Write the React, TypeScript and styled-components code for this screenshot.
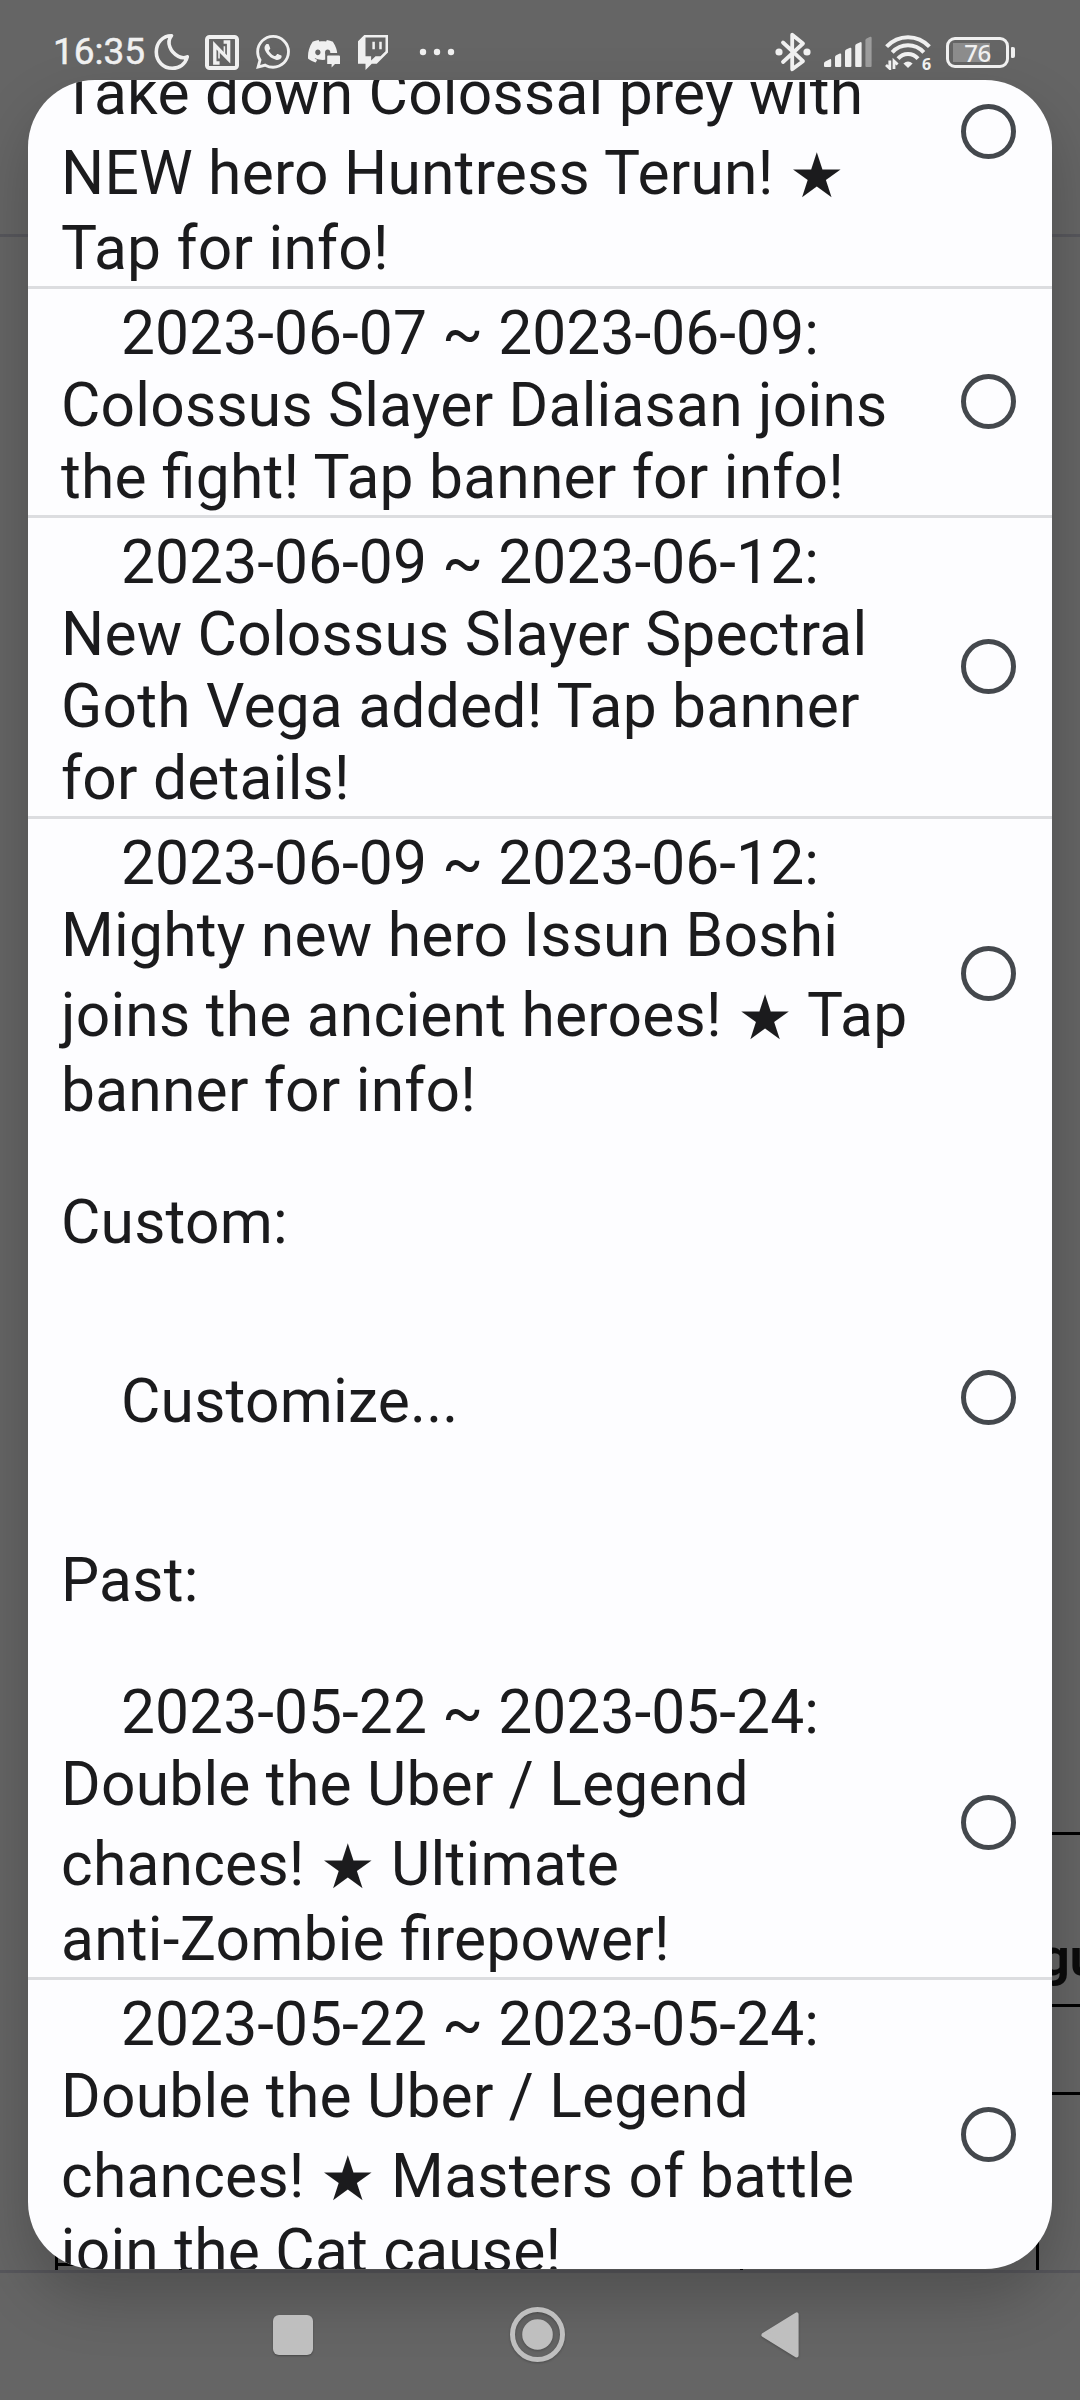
import React from 'react';
import styled, { createGlobalStyle } from 'styled-components';
import { SiDiscord, SiWhatsapp } from 'react-icons/si';

const GlobalStyle = createGlobalStyle`
  html, body { margin: 0; padding: 0; }
  body { background: #656565; font-family: Roboto, "Noto Sans", sans-serif; }
  *, *::before, *::after { box-sizing: border-box; }
`;

const Screen = styled.div`
  position: relative;
  width: 1080px;
  height: 2400px;
  overflow: hidden;
  background: #656565;
`;

/* ---- dimmed page behind the dialog ---- */
const DimmedPage = styled.div`
  display: flex;
  flex-direction: column;
  height: 2400px;
`;
const DimmedHeader = styled.div`
  height: 237px;
  border-bottom: 3px solid #57575c;
`;
const DimmedBody = styled.div`
  display: flex;
  flex-direction: column;
  align-items: flex-end;
  height: 2033px;
  padding-top: 1595px;
`;
const DimmedCell = styled.div<{ $h: number }>`
  display: flex;
  align-items: flex-end;
  width: 40px;
  height: ${p => p.$h}px;
  border-top: 3px solid #000;
`;
const DimmedText = styled.span`
  padding: 0 0 16px 0;
  font: 700 52px/60px Roboto, sans-serif;
  color: #0b0b0b;
  white-space: nowrap;
`;
const DimmedTable = styled.div`
  display: flex;
  width: 984px;
  height: 30px;
  margin: auto 41px 0 0;
  border: 0 solid #000;
  border-width: 0 3px;
  align-items: flex-end;
`;
const DimmedTableRow = styled.div`
  display: flex;
  width: 900px;
  height: 7px;
  border-top: 3px solid #000;
`;
const DimmedColumn = styled.div<{ $w: number }>`
  width: ${p => p.$w}px;
  border-right: 3px solid #000;
`;
const DimmedFooter = styled.div`
  flex: 1;
  border-top: 3px solid #57575c;
`;

/* ---- foreground ---- */
const Foreground = styled.div`
  position: absolute;
  inset: 0;
  display: flex;
  flex-direction: column;
`;

const StatusBar = styled.header`
  position: relative;
  z-index: 1;
  display: flex;
  align-items: center;
  height: 80px;
  padding: 24px 65px 0 53px;
`;
const Clock = styled.span`
  width: 101px;
  font: 400 37px/40px Roboto, sans-serif;
  -webkit-text-stroke: 0.5px #f0f0f0;
  color: #f0f0f0;
`;
const StatusSlot = styled.span<{ $gap?: number }>`
  display: flex;
  margin-left: ${p => p.$gap ?? 0}px;
  color: #f0f0f0;
  svg { display: block; }
`;
const Spring = styled.span`
  flex: 1;
`;
const Battery = styled.span`
  display: flex;
  align-items: center;
  margin-left: 15px;
`;
const BatteryBody = styled.span`
  display: flex;
  align-items: center;
  justify-content: center;
  width: 63px;
  height: 31px;
  border: 3px solid #f0f0f0;
  border-radius: 9px;
  font: 500 24px/25px "Noto Sans", sans-serif;
  letter-spacing: -0.6px;
  color: #f0f0f0;
  background: linear-gradient(#8c8c8c, #8c8c8c) 4px 3px / 37px 19px no-repeat;
  background-origin: padding-box;
`;
const BatteryCap = styled.span`
  width: 4px;
  height: 11px;
  margin-left: 2px;
  border-radius: 1px 2px 2px 1px;
  background: #f0f0f0;
`;

const Dialog = styled.main`
  height: 2189px;
  margin: 0 28px;
  border-radius: 67px;
  background: #fdfdff;
  overflow: hidden;
  box-shadow: 0 28px 60px rgba(0, 0, 0, 0.22);
`;
const ScrolledList = styled.div`
  display: flex;
  flex-direction: column;
  margin-top: -103px;
`;
const Entry = styled.section<{ $divided?: boolean }>`
  display: flex;
  flex: none;
  align-items: center;
  justify-content: space-between;
  padding: 0 35.7px 0 33px;
  border-bottom: ${p => (p.$divided ? '3px solid #dcdde0' : '0')};
`;
const EntryText = styled.div`
  padding: 9px 0 1px;
`;
const Line = styled.div<{ $indent?: boolean; $tall?: boolean }>`
  height: ${p => (p.$tall ? 83 : 72)}px;
  padding: ${p => (p.$tall ? 8 : 0)}px 0 0 ${p => (p.$indent ? 60 : 0)}px;
  font-size: 60.5px;
  line-height: 72px;
  letter-spacing: 0.22px;
  font-feature-settings: "liga" 1;
  color: #1b1b1d;
  white-space: pre;
`;
const DateLine = styled(Line)`
  letter-spacing: 0.05px;
`;
const Star = styled.span`
  display: inline-block;
  width: 56px;
  text-align: center;
  letter-spacing: 0;
  vertical-align: -3px;
  font: 62px/56px "DejaVu Sans", sans-serif;
`;
const ShortRow = styled.section`
  display: flex;
  flex: none;
  align-items: center;
  justify-content: space-between;
  height: 180px;
  padding: 0 35.7px 0 33px;
`;
const ShortText = styled.div<{ $top: number }>`
  padding-top: ${p => p.$top}px;
`;
const Radio = styled.span`
  flex: none;
  width: 55px;
  height: 55px;
  margin-bottom: 1px;
  border: 5.5px solid #44484d;
  border-radius: 50%;
`;

const NavBar = styled.nav`
  position: relative;
  z-index: 1;
  display: flex;
  align-items: center;
  height: 131px;
  padding-left: 273px;
  gap: 196.5px;
  color: #bfbfbf;
  svg { display: block; filter: drop-shadow(0 1px 1px rgba(0, 0, 0, 0.25)); }
`;
const Recents = styled.span`
  width: 40px;
  height: 40px;
  border-radius: 6px;
  background: #bfbfbf;
  box-shadow: 0 1px 2px rgba(0, 0, 0, 0.3);
`;

const MoonIcon = () => (
  <svg width="36" height="38" viewBox="0 0 36 38" fill="none" stroke="currentColor" strokeWidth="3.6" strokeLinejoin="round">
    <path d="M17.5 2.7C8.7 2.6 2.3 9.9 2.3 18.9C2.3 28.4 9.5 35.3 18.3 35.3C25.6 35.3 31.3 31 33.3 23.8C30.5 25.2 27.4 25 24.3 23.4C16.3 19.2 12 9.4 17.5 2.7Z" />
  </svg>
);
const NfcIcon = () => (
  <svg width="34" height="35" viewBox="0 0 34 35" fill="none" stroke="currentColor">
    <rect x="2" y="2" width="30" height="31" rx="2.6" strokeWidth="4" />
    <path d="M14.6 28H9.8V10.2L23.6 24.4V7H18.6" strokeWidth="3.4" />
    <path d="M14 14V23.4M19.4 20.4V11.2" strokeWidth="1.6" />
  </svg>
);
const DiscordIcon = () => (
  <svg width="32" height="35" viewBox="0 0 32 35">
    <mask id="bubbleGap">
      <rect width="32" height="35" fill="#fff" />
      <rect x="17.2" y="18" width="15" height="17" fill="#000" />
    </mask>
    <g mask="url(#bubbleGap)">
      <SiDiscord x={0} y={1.5} size={29.5} />
    </g>
    <path d="M20 20.5h11q1 0 1 1V29h-5l-3.4 3.6V29h-4.4V21q0-.5.8-.5z" fill="currentColor" />
  </svg>
);
const TwitchIcon = () => (
  <svg width="30" height="35" viewBox="1.714 0 20.572 24" fill="currentColor">
    <path d="M11.571 4.714h1.715v5.143H11.57zm4.715 0H18v5.143h-1.714zM6 0L1.714 4.286v15.428h5.143V24l4.286-4.286h3.428L22.286 12V0zm14.571 11.143l-3.428 3.428h-3.429l-3 3v-3H6.857V1.714h13.714Z" />
  </svg>
);
const MoreIcon = () => (
  <svg width="36" height="8" viewBox="0 0 36 8" fill="currentColor">
    <circle cx="4" cy="4" r="3.2" />
    <circle cx="18" cy="4" r="3.2" />
    <circle cx="32" cy="4" r="3.2" />
  </svg>
);
const BluetoothIcon = () => (
  <svg width="36" height="40" viewBox="0 0 36 40" fill="none" stroke="currentColor" strokeWidth="3.8" strokeLinejoin="round" strokeLinecap="round">
    <path d="M8 10.5L28 29.2L17.2 37.3V2.7L28 11.5L8 30" />
    <circle cx="4" cy="20" r="3.6" fill="currentColor" stroke="none" />
    <circle cx="32" cy="20" r="3.6" fill="currentColor" stroke="none" />
  </svg>
);
const SignalIcon = () => (
  <svg width="48" height="32" viewBox="0 0 48 32" fill="currentColor">
    <path d="M0 27.5Q0 26 1.4 25.4L5.8 23.2Q7.2 22.8 7.2 24.2V30Q7.2 31 6.2 31H1Q0 31 0 30Z" />
    <path d="M11 21.2Q11 19.8 12.2 19.2L15.8 17.6Q17.2 17.2 17.2 18.6V30Q17.2 31 16.2 31H12Q11 31 11 30Z" />
    <path d="M21 15.6Q21 14.2 22.2 13.6L26 11.8Q27.4 11.4 27.4 12.8V30Q27.4 31 26.4 31H22Q21 31 21 30Z" />
    <path d="M31.2 10Q31.2 8.6 32.4 8L36.2 6.2Q37.6 5.8 37.6 7.2V30Q37.6 31 36.6 31H32.2Q31.2 31 31.2 30Z" />
    <path opacity="0.4" d="M41.4 4.4Q41.4 3 42.6 2.4L46.2.8Q47.6.4 47.6 1.8V30Q47.6 31 46.6 31H42.4Q41.4 31 41.4 30Z" />
  </svg>
);
const SixLabel = styled.span`
  align-self: flex-end;
  width: 9px;
  margin: 0 0 -2px -9px;
  font: 700 16px/16px "Noto Sans", sans-serif;
`;
const WifiIcon = () => (
  <svg width="46" height="36" viewBox="0 0 46 36" fill="none" stroke="currentColor" strokeWidth="4">
    <path d="M1.6 12.6C13.5 0 32.5 0 44.4 12.6" />
    <path d="M7.2 18.4C16 9 30 9 38.8 18.4" />
    <path d="M13 24.6C18.5 18.4 27.5 18.4 33 24.6" />
    <path d="M18.4 29.4Q23 25.6 27.6 29.4L23 34Z" fill="currentColor" stroke="none" />
    <path d="M4.8 26.5V34.5L1 31M9 35V27L12.6 30.5" strokeWidth="2.8" />
  </svg>
);
const HomeIcon = () => (
  <svg width="55" height="55" viewBox="0 0 55 55" fill="none">
    <circle cx="27.5" cy="27.5" r="25" stroke="currentColor" strokeWidth="5" />
    <circle cx="27.5" cy="27.5" r="15.3" fill="currentColor" />
  </svg>
);
const BackIcon = () => (
  <svg width="38" height="46" viewBox="0 0 38 46" fill="currentColor" stroke="currentColor" strokeWidth="4" strokeLinejoin="round">
    <path d="M2.4 23L35.6 2.4V43.6Z" />
  </svg>
);

type EntryData = { date?: string; lines: string[]; divided?: boolean };

const upcoming: EntryData[] = [
  { lines: ['Take down Colossal prey with', 'NEW hero Huntress Terun! ★', 'Tap for info!'], divided: true },
  {
    date: '2023-06-07 ~ 2023-06-09:',
    lines: ['Colossus Slayer Daliasan joins', 'the fight! Tap banner for info!'],
    divided: true,
  },
  {
    date: '2023-06-09 ~ 2023-06-12:',
    lines: ['New Colossus Slayer Spectral', 'Goth Vega added! Tap banner', 'for details!'],
    divided: true,
  },
  {
    date: '2023-06-09 ~ 2023-06-12:',
    lines: ['Mighty new hero Issun Boshi', 'joins the ancient heroes! ★ Tap', 'banner for info!'],
  },
];
const past: EntryData[] = [
  {
    date: '2023-05-22 ~ 2023-05-24:',
    lines: ['Double the Uber / Legend', 'chances! ★ Ultimate', 'anti-Zombie firepower!'],
    divided: true,
  },
  {
    date: '2023-05-22 ~ 2023-05-24:',
    lines: ['Double the Uber / Legend', 'chances! ★ Masters of battle', 'join the Cat cause!'],
  },
];

const TextLine = ({ text }: { text: string }) => {
  const [before, after] = text.split('★');
  if (after === undefined) return <Line>{text}</Line>;
  return (
    <Line $tall>
      {before}
      <Star>★</Star>
      {after}
    </Line>
  );
};

const EntryRow = ({ date, lines, divided }: EntryData) => (
  <Entry $divided={divided}>
    <EntryText>
      <DateLine $indent>{date}</DateLine>
      {lines.map(text => (
        <TextLine key={text} text={text} />
      ))}
    </EntryText>
    <Radio />
  </Entry>
);

export default function App() {
  return (
    <Screen>
      <GlobalStyle />
      <DimmedPage>
        <DimmedHeader />
        <DimmedBody>
          <DimmedCell $h={172}>
            <DimmedText>gu</DimmedText>
          </DimmedCell>
          <DimmedCell $h={88} />
          <DimmedCell $h={3} />
          <DimmedTable>
            <DimmedTableRow>
              <DimmedColumn $w={124} />
              <DimmedColumn $w={296} />
              <DimmedColumn $w={265} />
            </DimmedTableRow>
          </DimmedTable>
        </DimmedBody>
        <DimmedFooter />
      </DimmedPage>

      <Foreground>
        <StatusBar>
          <Clock>16:35</Clock>
          <StatusSlot><MoonIcon /></StatusSlot>
          <StatusSlot $gap={15}><NfcIcon /></StatusSlot>
          <StatusSlot $gap={17}><SiWhatsapp size={34} /></StatusSlot>
          <StatusSlot $gap={18}><DiscordIcon /></StatusSlot>
          <StatusSlot $gap={18}><TwitchIcon /></StatusSlot>
          <StatusSlot $gap={31}><MoreIcon /></StatusSlot>
          <Spring />
          <StatusSlot><BluetoothIcon /></StatusSlot>
          <StatusSlot $gap={13}><SignalIcon /></StatusSlot>
          <StatusSlot $gap={13}>
            <WifiIcon />
            <SixLabel>6</SixLabel>
          </StatusSlot>
          <Battery>
            <BatteryBody>76</BatteryBody>
            <BatteryCap />
          </Battery>
        </StatusBar>

        <Dialog>
          <ScrolledList>
            {upcoming.map(entry => (
              <EntryRow key={entry.lines[0]} {...entry} />
            ))}
            <ShortRow>
              <ShortText $top={9}><Line>Custom:</Line></ShortText>
            </ShortRow>
            <ShortRow>
              <ShortText $top={7}><Line $indent>Customize...</Line></ShortText>
              <Radio />
            </ShortRow>
            <ShortRow>
              <ShortText $top={6}><Line>Past:</Line></ShortText>
            </ShortRow>
            {past.map(entry => (
              <EntryRow key={entry.lines[1]} {...entry} />
            ))}
          </ScrolledList>
        </Dialog>

        <NavBar>
          <Recents />
          <HomeIcon />
          <BackIcon />
        </NavBar>
      </Foreground>
    </Screen>
  );
}
